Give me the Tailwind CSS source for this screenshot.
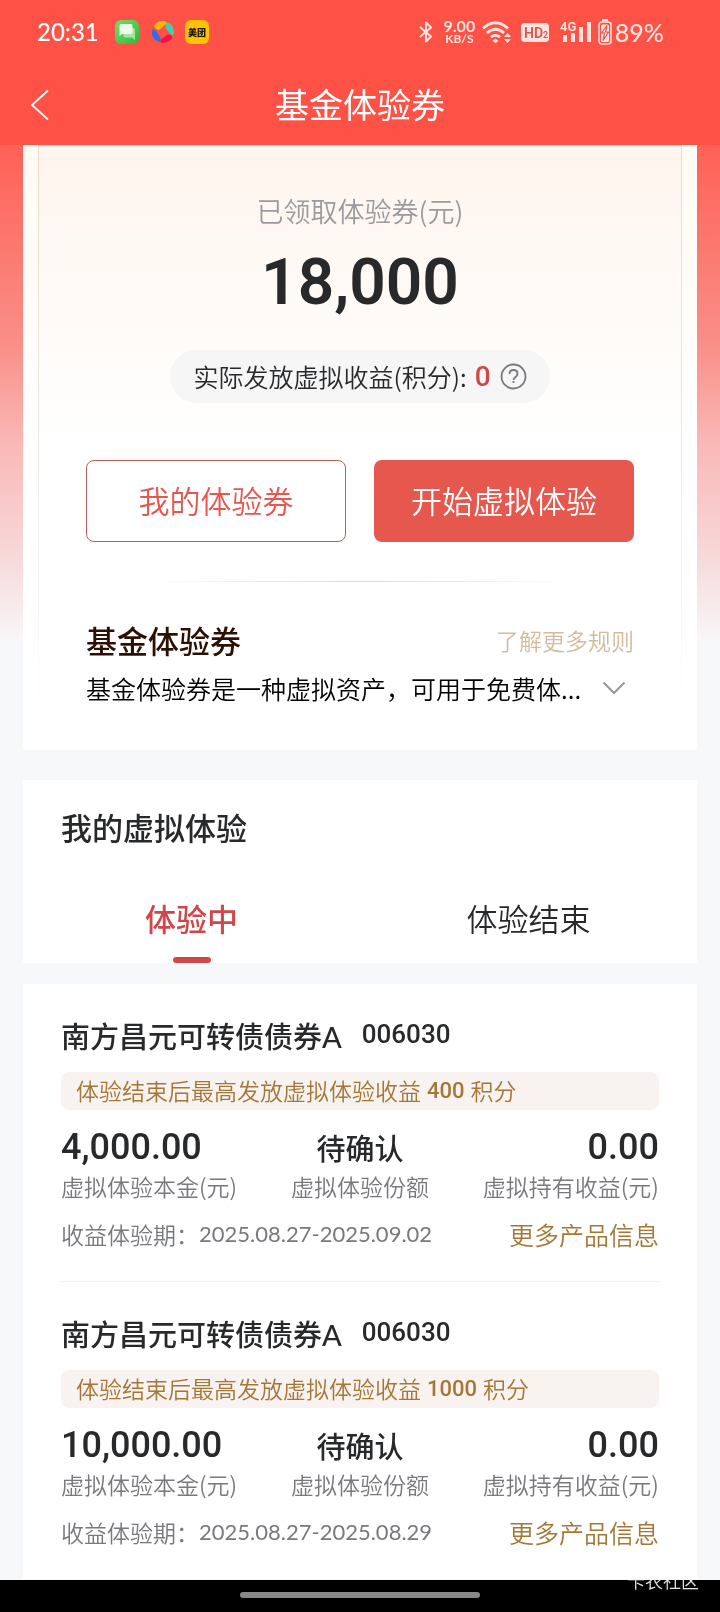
<!DOCTYPE html>
<html lang="zh-CN">
<head>
<meta charset="utf-8">
<meta name="viewport" content="width=device-width, initial-scale=1">
<title>基金体验券</title>
<script src="https://cdn.jsdelivr.net/npm/@tailwindcss/browser@4"></script>
</head>
<body class="flex min-h-screen flex-col bg-[#f7f8fa] font-['Noto_Sans_CJK_SC',sans-serif] font-[350] text-[#27292b]">

<header class="bg-[#fe5246] text-white">
  <!-- status bar -->
  <div class="flex h-16 items-center justify-between pl-[37px] pr-[56px] font-['Lato','Noto_Sans_CJK_SC',sans-serif]">
    <div class="flex items-center">
      <span class="mr-4 text-2xl leading-8 font-medium">20:31</span>
      <svg class="mr-3 size-6" viewBox="0 0 24 24" aria-hidden="true">
        <defs><linearGradient id="msg" x1="0" y1="0" x2="1" y2="1"><stop offset="0" stop-color="#74dc66"/><stop offset="1" stop-color="#31b83c"/></linearGradient></defs>
        <rect width="24" height="24" rx="6" fill="url(#msg)"/>
        <path d="M10 8h8.500q1.500 0 1.500 1.500V20l-3-2.500h-7q-1.500 0-1.500-1.500V9.500Q8.500 8 10 8z" fill="#a5e69d"/>
        <path d="M6 4h10q1.500 0 1.500 1.500v7q0 1.500-1.500 1.500H7.500L4.500 16V5.500Q4.500 4 6 4z" fill="#effbea"/>
      </svg>
      <svg class="mr-[10px] size-6" viewBox="0 0 24 24" aria-hidden="true">
        <path d="M3 6C5 2 10 0 14.500 1.500L16 3 8 10Q4 9 3 6z" fill="#fbb90e"/>
        <path d="M15 3Q17 2 18.500 3.200 23 6.500 23 13 22 16 20 15L14.500 8Q14 5 15 3z" fill="#45cfa9"/>
        <path d="M20.500 15.500Q22 17 20.500 19 17 23 10.500 23 8.500 21.500 9.500 20L16 15Q18.500 14 20.500 15.500z" fill="#f3104d"/>
        <path d="M1.500 9.500Q3 9 4.500 10.500L9 17Q10.500 20 8 22 3 20 1 15 .500 12 1.500 9.500z" fill="#2f6ee8"/>
      </svg>
      <svg class="size-6" viewBox="0 0 24 24" aria-label="美团">
        <rect width="24" height="24" rx="6" fill="#ffc300"/>
        <text x="12" y="15.500" text-anchor="middle" font-size="9" font-weight="900" font-family="Noto Sans CJK SC, sans-serif" fill="#1c1703">美团</text>
      </svg>
    </div>
    <div class="flex items-center text-[#ffe3df]">
      <svg class="mr-[10px] h-6 w-[14px]" viewBox="0 0 14 24" fill="none" stroke="currentColor" stroke-width="2" stroke-linejoin="round" stroke-linecap="round" aria-hidden="true"><path d="M1.500 7.500 12 16.500 7 21.500V2.500L12 7.500 1.500 16.500"/></svg>
      <div class="mr-[6px] flex w-[33px] flex-col items-center font-bold">
        <span class="text-[16px] leading-[14px]">9.00</span>
        <span class="text-[12px] leading-[12px]">KB/S</span>
      </div>
      <svg class="mr-[9px] h-6 w-[30px]" viewBox="0 0 30 24" fill="none" stroke="currentColor" stroke-width="2.800" aria-hidden="true">
        <path d="M1 8.500Q13.500-3 26 8.500M5 13Q13.500 5.500 22 13M9 17.200Q13.500 13.500 18 17.200"/>
        <path d="M13.500 18.500l3 2.300-3 2.400-3-2.400z" fill="currentColor" stroke="none"/>
        <path d="M25.500 13l3.500 4h-7zM25.500 23l3.500-4h-7z" fill="currentColor" stroke="none"/>
      </svg>
      <svg class="mr-[11px] h-[19px] w-7" viewBox="0 0 28 19" aria-label="HD2">
        <rect width="28" height="19" rx="4" fill="currentColor"/>
        <text x="3" y="14.500" font-size="14" font-weight="600" font-family="Roboto, sans-serif" fill="#d9564e">HD<tspan font-size="9">2</tspan></text>
      </svg>
      <svg class="mr-[7px] h-6 w-[31px]" viewBox="0 0 31 24" fill="currentColor" aria-label="4G">
        <text x="0" y="11" font-size="13" font-weight="600" font-family="Roboto, sans-serif">4G</text>
        <path d="M3 15h4v7H3zM11 13h4v9h-4zM19 7h4v15h-4zM27 2h4v20h-4z"/>
      </svg>
      <svg class="mr-[3px] h-[26px] w-[14px]" viewBox="0 0 14 26" aria-hidden="true">
        <path d="M4 1h6" stroke="currentColor" stroke-width="2"/>
        <rect x="1" y="3" width="12" height="22" rx="3" fill="none" stroke="currentColor" stroke-width="1.500"/>
        <rect x="3" y="5.500" width="8" height="17.500" rx="1.500" fill="currentColor"/>
        <path d="M9 6.500 3.500 14h3L5 21.500 10.500 13h-3z" fill="#ffe3df" stroke="#e9564b" stroke-width="1.200"/>
      </svg>
      <span class="text-[25px] leading-8 font-medium">89%</span>
    </div>
  </div>
  <!-- title bar -->
  <div class="grid h-[81px] grid-cols-[1fr_auto_1fr] items-center px-[30px]">
    <button type="button" aria-label="返回" class="w-[19px]">
      <svg class="h-8 w-[19px]" viewBox="0 0 19 32" fill="none" stroke="#fff" stroke-width="1.800" aria-hidden="true"><path d="M18 1.500 2 16l16 14.500"/></svg>
    </button>
    <h1 class="pb-[2px] text-[34px] leading-10 font-normal">基金体验券</h1>
  </div>
</header>

<main class="flex-1 bg-[linear-gradient(#ff6156_0px,#f98f88_200px,#f9b9b7_300px,#f8d5d5_400px,#f7f8fa_500px)] px-[23px]">
  <!-- voucher summary -->
  <section class="bg-[linear-gradient(#fffaf3,#fff_300px)] px-[15px]">
    <div class="border bg-[linear-gradient(#fef5ed,#fff_300px)] px-[47px] pt-[45px] pb-[41px] [border-image:linear-gradient(#e8dcc8,#e9e4dc_40%,#fff_95%)_1]">
      <p class="text-center text-[27px] leading-10 text-[#9a9b9e]">已领取体验券(元)</p>
      <p class="mt-5 text-center font-['Roboto',sans-serif] text-[64px] leading-[64px] font-semibold">18,000</p>
      <div class="mx-auto mt-[35px] flex h-[53px] w-fit items-center rounded-full bg-[#f6f6f7] px-[23px] text-[25px]">
        <span>实际发放虚拟收益(积分):</span>
        <span class="ml-2 font-['Roboto',sans-serif] text-[28px] font-medium text-[#d0474a]">0</span>
        <button type="button" aria-label="说明" class="ml-[9px]">
          <svg class="size-[27px]" viewBox="0 0 27 27" fill="none" stroke="#77797d" stroke-width="1.800" aria-hidden="true"><circle cx="13.500" cy="13.500" r="12"/><path d="M9.500 11Q9.500 7 13.500 7t4 3.700q0 1.800-2 3.300t-2 3M13.500 18v2"/></svg>
        </button>
      </div>
      <div class="mt-[57px] grid grid-cols-2 gap-7 text-[31px]">
        <button type="button" class="h-[82px] rounded-lg border border-[#b8605b] bg-white pb-[2px] text-[#e4584f]">我的体验券</button>
        <button type="button" class="h-[82px] rounded-lg bg-[#e6574d] pb-[2px] text-white">开始虚拟体验</button>
      </div>
      <div class="mx-16 mt-[39px] h-px bg-[linear-gradient(90deg,#fff,#ddd8cf_50%,#fff)]"></div>
      <div class="mt-[38px] flex items-center justify-between">
        <h2 class="text-[31px] leading-10 font-medium text-[#2c1004]">基金体验券</h2>
        <a href="#" class="text-[23px] leading-10 text-[#d3bc9d]">了解更多规则</a>
      </div>
      <div class="mt-2 flex items-center justify-between">
        <p class="text-[25px] leading-10 text-black">基金体验券是一种虚拟资产，可用于免费体...</p>
        <button type="button" aria-label="展开" class="mr-2">
          <svg class="h-[14px] w-6" viewBox="0 0 24 14" fill="none" stroke="#999" stroke-width="2.200" aria-hidden="true"><path d="M1.500 1.500 12 12 22.500 1.500"/></svg>
        </button>
      </div>
    </div>
  </section>

  <!-- tabs -->
  <section class="mt-[30px] bg-white pt-[27px]">
    <h2 class="px-[38px] text-[31px] leading-10 font-medium">我的虚拟体验</h2>
    <div class="mt-[41px] grid grid-cols-2 text-[31px]" role="tablist">
      <button type="button" role="tab" aria-selected="true" class="flex flex-col items-center font-medium text-[#d0474a]"><span class="leading-[60px]">体验中</span><span class="mt-[9px] h-[6px] w-[38px] rounded-full bg-[#d0474a]"></span></button>
      <button type="button" role="tab" aria-selected="false" class="flex flex-col items-center"><span class="leading-[60px]">体验结束</span></button>
    </div>
  </section>

  <!-- holdings -->
  <section class="mt-[21px] bg-white px-[38px]">
    <article class="border-b border-[#f3f3f4] pt-8 pb-[31px]">
      <h3 class="flex h-10 items-center text-[29px] font-medium"><span class="leading-none">南方昌元可转债债券<span class="font-['Lato',sans-serif]">A</span></span><span class="ml-5 pb-1 font-['Roboto',sans-serif] text-[26px] leading-9 font-medium">006030</span></h3>
      <p class="mt-4 flex h-[38px] items-center gap-[6px] rounded-lg bg-[#f8f3f0] px-[15px] pb-[2px] text-[23px] text-[#a57736]"><span>体验结束后最高发放虚拟体验收益</span><span class="font-['Roboto',sans-serif] text-[22px] font-medium">400</span><span>积分</span></p>
      <dl class="mt-[17px] grid grid-cols-3 text-[23px] leading-8 text-[#77797d]">
        <div class="flex flex-col-reverse gap-[3px]"><dt>虚拟体验本金(元)</dt><dd class="font-['Roboto',sans-serif] text-4xl leading-10 font-medium text-[#27292b]">4,000.00</dd></div>
        <div class="flex flex-col-reverse gap-[3px] text-center"><dt>虚拟体验份额</dt><dd class="text-[29px] leading-10 font-medium text-[#27292b]">待确认</dd></div>
        <div class="flex flex-col-reverse gap-[3px] text-right"><dt>虚拟持有收益(元)</dt><dd class="font-['Roboto',sans-serif] text-4xl leading-10 font-medium text-[#27292b]">0.00</dd></div>
      </dl>
      <div class="mt-4 flex items-center justify-between leading-8">
        <p class="flex text-[23px] text-[#77797d]"><span>收益体验期：</span><span class="font-['Lato',sans-serif] text-[22px] font-normal">2025.08.27-2025.09.02</span></p>
        <a href="#" class="text-[25px] text-[#a57736]">更多产品信息</a>
      </div>
    </article>
    <article class="pt-8 pb-[31px]">
      <h3 class="flex h-10 items-center text-[29px] font-medium"><span class="leading-none">南方昌元可转债债券<span class="font-['Lato',sans-serif]">A</span></span><span class="ml-5 pb-1 font-['Roboto',sans-serif] text-[26px] leading-9 font-medium">006030</span></h3>
      <p class="mt-4 flex h-[38px] items-center gap-[6px] rounded-lg bg-[#f8f3f0] px-[15px] pb-[2px] text-[23px] text-[#a57736]"><span>体验结束后最高发放虚拟体验收益</span><span class="font-['Roboto',sans-serif] text-[22px] font-medium">1000</span><span>积分</span></p>
      <dl class="mt-[17px] grid grid-cols-3 text-[23px] leading-8 text-[#77797d]">
        <div class="flex flex-col-reverse gap-[3px]"><dt>虚拟体验本金(元)</dt><dd class="font-['Roboto',sans-serif] text-4xl leading-10 font-medium text-[#27292b]">10,000.00</dd></div>
        <div class="flex flex-col-reverse gap-[3px] text-center"><dt>虚拟体验份额</dt><dd class="text-[29px] leading-10 font-medium text-[#27292b]">待确认</dd></div>
        <div class="flex flex-col-reverse gap-[3px] text-right"><dt>虚拟持有收益(元)</dt><dd class="font-['Roboto',sans-serif] text-4xl leading-10 font-medium text-[#27292b]">0.00</dd></div>
      </dl>
      <div class="mt-4 flex items-center justify-between leading-8">
        <p class="flex text-[23px] text-[#77797d]"><span>收益体验期：</span><span class="font-['Lato',sans-serif] text-[22px] font-normal">2025.08.27-2025.08.29</span></p>
        <a href="#" class="text-[25px] text-[#a57736]">更多产品信息</a>
      </div>
    </article>
  </section>
</main>

<!-- gesture bar with the community watermark over its upper edge -->
<footer class="relative flex h-8 items-start justify-center bg-black pt-3">
  <div class="h-[6px] w-60 rounded-full bg-[#888]"></div>
  <span class="absolute -top-3 right-[21px] text-[18px] leading-6 text-[#e4e4e4] mix-blend-lighten">卡农社区</span>
</footer>
</body>
</html>
